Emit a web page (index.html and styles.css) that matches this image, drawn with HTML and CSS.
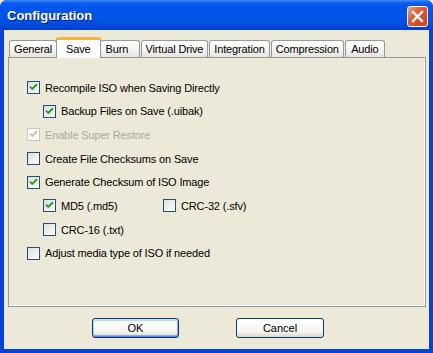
FILE: index.html
```html
<!DOCTYPE html>
<html lang="en">
<head>
    <meta charset="UTF-8">
    <title>Configuration</title>
    <link rel="stylesheet" href="styles.css">
</head>
<body>
    <div class="window">
        <div class="titlebar">
            <span class="title">Configuration</span>
            <button class="close-btn">
                <svg width="19" height="19" viewBox="0 0 19 19"><path d="M5 5 L14 14 M14 5 L5 14" stroke="#fff" stroke-width="2.4" stroke-linecap="square"/></svg>
            </button>
        </div>

        <div class="dialog-body">
            <div class="tabs">
                <div class="tab">General</div>
                <div class="tab active">Save</div>
                <div class="tab tab-burn">Burn</div>
                <div class="tab">Virtual Drive</div>
                <div class="tab">Integration</div>
                <div class="tab">Compression</div>
                <div class="tab">Audio</div>
            </div>

            <div class="tab-panel">
                <div class="option">
                    <span class="check"><svg width="11" height="11" viewBox="0 0 11 11"><path d="M2 4.6 L4.3 6.9 L9 2.2" fill="none" stroke="#21a121" stroke-width="2"/></svg></span>
                    Recompile ISO when Saving Directly
                </div>
                <div class="option indent">
                    <span class="check"><svg width="11" height="11" viewBox="0 0 11 11"><path d="M2 4.6 L4.3 6.9 L9 2.2" fill="none" stroke="#21a121" stroke-width="2"/></svg></span>
                    Backup Files on Save (.uibak)
                </div>
                <div class="option disabled">
                    <span class="check"><svg width="11" height="11" viewBox="0 0 11 11"><path d="M2 4.6 L4.3 6.9 L9 2.2" fill="none" stroke="#c5c2b2" stroke-width="2"/></svg></span>
                    Enable Super Restore
                </div>
                <div class="option">
                    <span class="check"></span>
                    Create File Checksums on Save
                </div>
                <div class="option">
                    <span class="check"><svg width="11" height="11" viewBox="0 0 11 11"><path d="M2 4.6 L4.3 6.9 L9 2.2" fill="none" stroke="#21a121" stroke-width="2"/></svg></span>
                    Generate Checksum of ISO Image
                </div>
                <div class="option-row indent">
                    <div class="option col">
                        <span class="check"><svg width="11" height="11" viewBox="0 0 11 11"><path d="M2 4.6 L4.3 6.9 L9 2.2" fill="none" stroke="#21a121" stroke-width="2"/></svg></span>
                        MD5 (.md5)
                    </div>
                    <div class="option">
                        <span class="check"></span>
                        CRC-32 (.sfv)
                    </div>
                </div>
                <div class="option indent">
                    <span class="check"></span>
                    CRC-16 (.txt)
                </div>
                <div class="option">
                    <span class="check"></span>
                    Adjust media type of ISO if needed
                </div>
            </div>

            <div class="buttons">
                <button class="btn default">OK</button>
                <button class="btn">Cancel</button>
            </div>
        </div>
    </div>
</body>
</html>
```

FILE: styles.css
```css
body {
    margin: 0;
    font-family: "Liberation Sans", Arial, sans-serif;
    font-size: 11px;
    letter-spacing: -0.15px;
    color: #000;
    background: #ece9d8;
}

.window {
    width: 433px;
    height: 353px;
    box-sizing: border-box;
    display: flex;
    flex-direction: column;
    background: #0842d8;
    border-radius: 7px 7px 0 0;
    overflow: hidden;
}

.titlebar {
    height: 30px;
    flex: none;
    display: flex;
    align-items: center;
    justify-content: space-between;
    padding: 0 5px 0 7px;
    background: linear-gradient(#3d8df7 0, #0a5df0 3px, #0055ea 7px, #0054e8 20px, #0049db 26px, #003fcd 30px);
}

.title {
    color: #fff;
    font-size: 13px;
    font-weight: bold;
    letter-spacing: 0;
    text-shadow: 1px 1px 0 #0a1883;
    margin-top: 1px;
}

.close-btn {
    width: 21px;
    height: 21px;
    padding: 0;
    margin-top: 2px;
    border: 1px solid #fff;
    border-radius: 3px;
    background: linear-gradient(135deg, #f0a088 0%, #e2572f 40%, #cc3d1c 100%);
    display: flex;
    align-items: center;
    justify-content: center;
}

.dialog-body {
    flex: 1;
    margin: 0 4px 4px;
    padding: 7px 3px 0 4px;
    background: #ece9d8;
    display: flex;
    flex-direction: column;
}

.tabs {
    display: flex;
    align-items: flex-end;
    gap: 1px;
    height: 21px;
    padding-left: 1px;
    margin-bottom: -1px;
}

.tab {
    height: 17px;
    box-sizing: border-box;
    margin-bottom: 1px;
    padding: 2px 4px 0;
    min-width: 40px;
    text-align: center;
    border: 1px solid #919b9c;
    border-bottom: none;
    border-radius: 3px 3px 0 0;
    background: linear-gradient(#ffffff, #f3f3ef 60%, #e6e4da);
    white-space: nowrap;
}

.tab.active {
    position: relative;
    height: 21px;
    margin: 0 -2px;
    padding: 3px 9px 0;
    border-top: 3px solid #f4b33c;
    background: #fcfcfe;
}

.tab-burn {
    text-align: left;
    padding-left: 5px;
}

.tab-panel {
    height: 250px;
    box-sizing: border-box;
    border: 1px solid #919b9c;
    box-shadow: inset -1px -1px 0 #fff;
    padding: 23px 0 0 18px;
    display: flex;
    flex-direction: column;
    gap: 10.7px;
}

.option {
    display: flex;
    align-items: center;
    gap: 5px;
    height: 13px;
    white-space: nowrap;
}

.option-row {
    display: flex;
    height: 13px;
}

.option.col {
    width: 120px;
}

.indent {
    margin-left: 16px;
}

.check {
    width: 13px;
    height: 13px;
    box-sizing: border-box;
    flex: none;
    border: 1px solid #1c5180;
    background: linear-gradient(135deg, #dcdcd7, #ffffff);
    display: flex;
}

.disabled {
    color: #aca899;
}

.disabled .check {
    border-color: #cac8bb;
    background: #fff;
}

.buttons {
    display: flex;
    gap: 57px;
    margin-top: 11px;
    padding-left: 84px;
}

.btn {
    height: 20px;
    width: 87px;
    padding: 0;
    font-family: "Liberation Sans", Arial, sans-serif;
    font-size: 11px;
    color: #000;
    border: 1px solid #003c74;
    border-radius: 3px;
    background: linear-gradient(#ffffff, #f5f4ef 70%, #dcd8cb);
}

.btn + .btn {
    width: 88px;
}

.btn.default {
    box-shadow: inset 0 1px 0 #cee7ff, inset 0 -1px 0 #6982ee, inset 1px 0 0 #bcd4f6, inset -1px 0 0 #89ade4,
        inset 0 2px 0 #bcd4f6, inset 0 -2px 0 #89ade4;
}
```
